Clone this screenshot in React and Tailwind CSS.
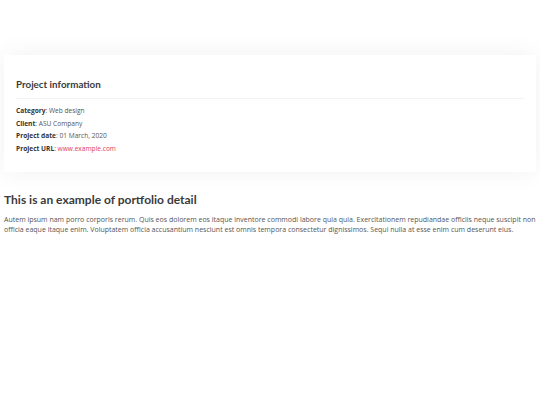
export default function App() {
  const items = [
    { label: "Category", value: "Web design" },
    { label: "Client", value: "ASU Company" },
    { label: "Project date", value: "01 March, 2020" },
    { label: "Project URL", value: "www.example.com", link: true },
  ];

  return (
    <div className="min-h-screen bg-white px-1 pt-[55px] font-['Open_Sans',sans-serif] text-[#444]">
      {/* Project info card */}
      <div className="bg-white px-3 pt-[22px] pb-[17px] shadow-[0_0_24px_rgba(0,0,0,0.06)]">
        <h3 className="font-['Lato',sans-serif] text-[9.8px] font-bold leading-[14px] text-[#3b3b3b]">
          Project information
        </h3>
        <div className="mt-[7px] mb-[6px] border-t border-[#f3f3f3]" />
        <ul className="text-[6.6px] leading-[12.5px]">
          {items.map((item) => (
            <li key={item.label}>
              <strong className="font-bold text-[#333]">{item.label}</strong>
              <span className="text-[#555]">: </span>
              {item.link ? (
                <a href="#" className="text-[#e43c5c]">
                  {item.value}
                </a>
              ) : (
                <span className="text-[#555]">{item.value}</span>
              )}
            </li>
          ))}
        </ul>
      </div>

      {/* Description */}
      <div className="mt-[20px]">
        <h2 className="font-['Lato',sans-serif] text-[12px] font-bold leading-[16px] text-[#3b3b3b]">
          This is an example of portfolio detail
        </h2>
        <p className="mt-[7px] text-[7px] leading-[9.5px] text-[#555]">
          Autem ipsum nam porro corporis rerum. Quis eos dolorem eos itaque inventore commodi labore quia quia. Exercitationem repudiandae officiis neque suscipit non officia eaque itaque enim. Voluptatem officia accusantium nesciunt est omnis tempora consectetur dignissimos. Sequi nulla at esse enim cum deserunt eius.
        </p>
      </div>
    </div>
  );
}
